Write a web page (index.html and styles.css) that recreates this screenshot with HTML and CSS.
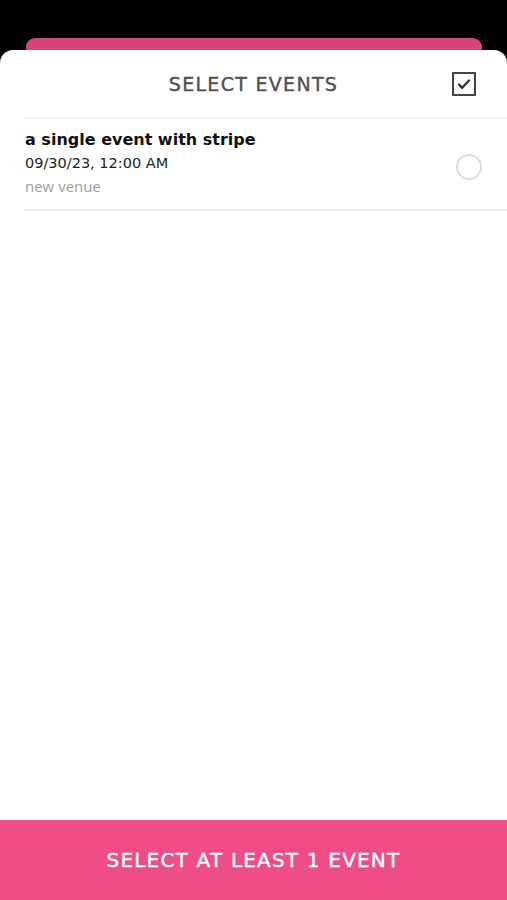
FILE: index.html
```html
<!DOCTYPE html>
<html lang="en">
<head>
  <meta charset="UTF-8" />
  <meta name="viewport" content="width=device-width, initial-scale=1.0"/>
  <title>Select Events</title>
  <link rel="stylesheet" href="styles.css">
</head>
<body>
  <div class="backdrop">
    <div class="behind-card"></div>
  </div>
  <div class="sheet">
    <div class="sheet-header">
      <h1>SELECT EVENTS</h1>
      <span class="select-all">
        <svg width="24" height="24" viewBox="0 0 24 24">
          <rect x="1" y="1" width="22" height="22" fill="none" stroke="#444" stroke-width="2"/>
          <path d="M7 12.5l3.2 3.3L17 8.5" fill="none" stroke="#333" stroke-width="2.4" stroke-linecap="round" stroke-linejoin="round"/>
        </svg>
      </span>
    </div>
    <ul class="event-list">
      <li class="event-row">
        <div class="event-info">
          <div class="event-name">a single event with stripe</div>
          <div class="event-date">09/30/23, 12:00 AM</div>
          <div class="event-venue">new venue</div>
        </div>
        <span class="radio"></span>
      </li>
    </ul>
  </div>
  <button class="submit-btn">SELECT AT LEAST 1 EVENT</button>
</body>
</html>
```

FILE: styles.css
```css
html, body {
  margin: 0;
  padding: 0;
  height: 100%;
}
body {
  font-family: 'DejaVu Sans', 'Noto Sans', sans-serif;
  background: #000;
  display: flex;
  flex-direction: column;
  height: 900px;
  overflow: hidden;
}
.backdrop {
  height: 50px;
  display: flex;
  align-items: flex-end;
  padding: 0 25px 0 26px;
  flex-shrink: 0;
}
.behind-card {
  flex: 1;
  height: 12px;
  background: #d6457a;
  border-radius: 9px 9px 0 0;
}
.sheet {
  flex: 1;
  background: #fff;
  border-radius: 13px 13px 0 0;
  display: flex;
  flex-direction: column;
}
.sheet-header {
  height: 68px;
  display: flex;
  align-items: center;
  justify-content: center;
  position: relative;
  margin-left: 25px;
  border-bottom: 1px solid #ececec;
}
.sheet-header h1 {
  margin: 0 0 0 -25px;
  font-size: 19px;
  font-weight: normal;
  letter-spacing: 1.3px;
  color: #505050;
  -webkit-text-stroke: 0.4px #505050;
}
.select-all {
  position: absolute;
  right: 31px;
  top: 22px;
  width: 24px;
  height: 24px;
}
.event-list {
  list-style: none;
  margin: 0;
  padding: 0 0 0 25px;
}
.event-row {
  display: flex;
  align-items: center;
  justify-content: space-between;
  padding: 10px 25px 11px 0;
  border-bottom: 2px solid #eeeeee;
}
.event-name {
  font-size: 16px;
  font-weight: bold;
  color: #111;
  line-height: 22px;
}
.event-date {
  font-size: 14.5px;
  color: #222;
  line-height: 24px;
}
.event-venue {
  font-family: 'Open Sans', sans-serif;
  font-size: 15px;
  color: #a0a0a0;
  line-height: 23px;
}
.radio {
  width: 22px;
  height: 22px;
  border: 2px solid #dddddd;
  border-radius: 50%;
  margin-top: 7px;
}
.submit-btn {
  flex-shrink: 0;
  height: 80px;
  border: none;
  background: #ee4d87;
  color: #fff;
  font-family: 'DejaVu Sans', sans-serif;
  font-size: 20px;
  letter-spacing: 1.2px;
  -webkit-text-stroke: 0.4px #fff;
}
```
